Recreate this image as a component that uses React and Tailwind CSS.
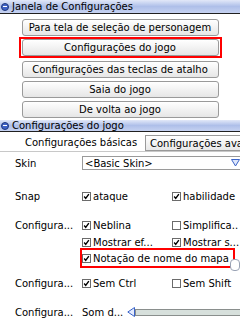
import React from "react";

const font = { fontFamily: '"DejaVu Sans", Verdana, sans-serif' };

const TitleBar = ({ title, h = "h-[14px]" }) => (
  <div className={`${h} flex items-center bg-gradient-to-b from-[#e2e8f8] via-[#aebfe9] to-[#c6d2f1] border-b border-[#202020]`}>
    <div className="w-[8px] h-[8px] rounded-full bg-[#3f63c8] border border-[#22397a] ml-[1px] flex items-center justify-center">
      <div className="w-[4px] h-[1px] bg-white" />
    </div>
    <span className="ml-[3px] text-[10px] leading-none text-black">{title}</span>
  </div>
);

const MenuButton = ({ label }) => (
  <div className="w-[197px] h-[17px] rounded-[3px] border border-[#9a9a9a] bg-gradient-to-b from-white to-[#e6e6e6] flex items-center justify-center text-[10px] text-black">
    {label}
  </div>
);

const Check = ({ on, label }) => (
  <div className="flex items-center gap-[2px] text-[10px] text-black whitespace-nowrap">
    <div className="w-[9px] h-[9px] border border-[#6b6b6b] bg-white flex items-center justify-center">
      {on && (
        <svg width="9" height="9" viewBox="0 0 9 9">
          <path d="M1.5 4.5 L3.5 7 L7.5 1.5" stroke="#000" strokeWidth="1.8" fill="none" />
        </svg>
      )}
    </div>
    <span>{label}</span>
  </div>
);

const Row = ({ label, children, className = "" }) => (
  <div className={`flex items-center h-[14px] ${className}`}>
    <span className="w-[82px] pl-[15px] text-[10px] text-black whitespace-nowrap">{label}</span>
    {children}
  </div>
);

export default function App() {
  return (
    <div className="w-[240px] h-[320px] bg-white overflow-hidden" style={font}>
      <TitleBar title="Janela de Configurações" />

      {/* Menu buttons */}
      <div className="flex flex-col items-center pt-[5px]">
        <MenuButton label="Para tela de seleção de personagem" />
        <div className="border-2 border-[#ff0000] px-[1px] mt-[1px]">
          <MenuButton label="Configurações do jogo" />
        </div>
        <div className="flex flex-col gap-[3px] mt-[3px]">
          <MenuButton label="Configurações das teclas de atalho" />
          <MenuButton label="Saia do jogo" />
          <MenuButton label="De volta ao jogo" />
        </div>
      </div>

      <div className="mt-[2px]">
        <TitleBar title="Configurações do jogo" h="h-[12px]" />
      </div>

      {/* Tabs */}
      <div className="flex items-end h-[20px] border-b border-[#c8c8c8]">
        <div className="w-[145px] h-[18px] flex items-center pl-[25px] text-[10px] text-black whitespace-nowrap">
          Configurações básicas
        </div>
        <div className="flex-1 h-[16px] border border-[#9a9a9a] border-r-0 bg-gradient-to-b from-white to-[#e8e8e8] flex items-center pl-[4px] text-[10px] text-black whitespace-nowrap overflow-hidden">
          Configurações avançadas
        </div>
      </div>

      <Row label="Skin" className="mt-[4px]">
        <div className="flex-1 h-[14px] border border-[#9a9a9a] border-r-0 flex items-center pl-[2px] text-[10px] text-black relative">
          &lt;Basic Skin&gt;
          <svg className="absolute right-[0px] top-[2px]" width="9" height="8" viewBox="0 0 9 8">
            <path d="M0.5 0.5 L8.5 0.5 L4.5 7 Z" fill="#dde6fb" stroke="#3b64c8" strokeWidth="1" />
          </svg>
        </div>
      </Row>

      <Row label="Snap" className="mt-[19px]">
        <div className="w-[90px]"><Check on label="ataque" /></div>
        <Check on label="habilidade" />
      </Row>

      <Row label="Configura..." className="mt-[15px]">
        <div className="w-[90px]"><Check on label="Neblina" /></div>
        <Check label="Simplifica.." />
      </Row>

      <div className="flex items-center h-[12px] pl-[82px] mt-[4px]">
        <div className="w-[90px]"><Check on label="Mostrar ef..." /></div>
        <Check on label="Mostrar s..." />
      </div>

      <div className="relative flex items-center ml-[80px] w-[155px] h-[20px] border-2 border-[#ff0000]">
        <Check on label="Notação de nome do mapa" />
        <div className="absolute right-[-7px] top-[9px] w-[10px] h-[12px] rounded-[4px] border border-[#9aa3b5] bg-white" />
      </div>

      <Row label="Configura..." className="mt-[8px]">
        <div className="w-[90px]"><Check on label="Sem Ctrl" /></div>
        <Check label="Sem Shift" />
      </Row>

      <Row label="Configura..." className="mt-[15px]">
        <span className="text-[10px] text-black whitespace-nowrap">Som d...</span>
        <div className="flex items-center ml-[4px] flex-1">
          <svg width="8" height="10" viewBox="0 0 8 10">
            <path d="M7.5 0.5 L7.5 9.5 L0.8 5 Z" fill="#e3ebff" stroke="#3b64c8" strokeWidth="1" />
          </svg>
          <div className="flex-1 h-[7px] border border-[#8a8f8d] border-r-0 bg-[#d7e0dc]" />
        </div>
      </Row>
    </div>
  );
}
